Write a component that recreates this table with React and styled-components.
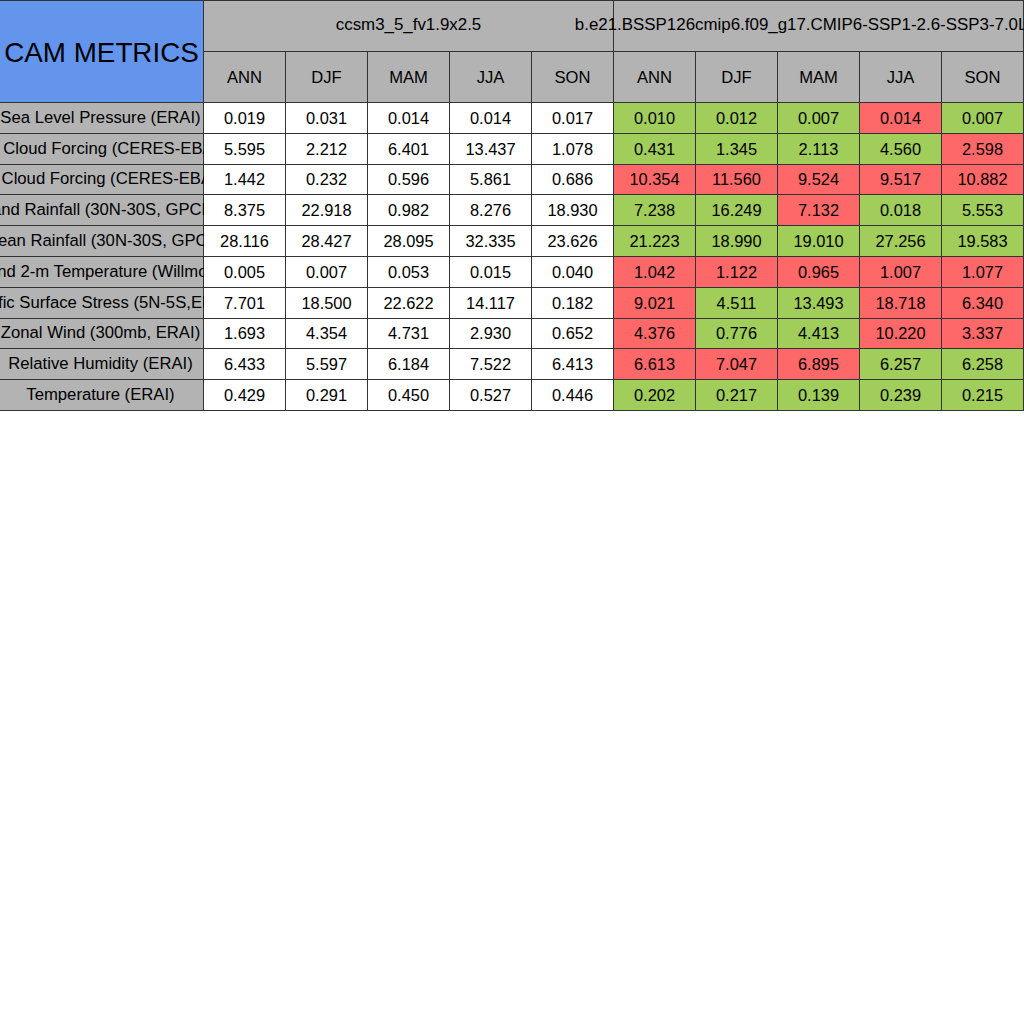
import styled, { createGlobalStyle } from "styled-components";

const GlobalStyle = createGlobalStyle`
	html, body {
		margin: 0;
		padding: 0;
		background: #ffffff;
	}
	body {
		font-family: "Liberation Sans", Arial, sans-serif;
		color: #000000;
	}
`;

const seasons = ["ANN", "DJF", "MAM", "JJA", "SON"];

const baseCase = "ccsm3_5_fv1.9x2.5";
const testCase = "b.e21.BSSP126cmip6.f09_g17.CMIP6-SSP1-2.6-SSP3-7.0LE.01";

// first five numbers: base case, last five: test case
const metrics = [
	["Sea Level Pressure (ERAI)", [0.019, 0.031, 0.014, 0.014, 0.017], [0.01, 0.012, 0.007, 0.014, 0.007]],
	["SW Cloud Forcing (CERES-EBAF)", [5.595, 2.212, 6.401, 13.437, 1.078], [0.431, 1.345, 2.113, 4.56, 2.598]],
	["LW Cloud Forcing (CERES-EBAF)", [1.442, 0.232, 0.596, 5.861, 0.686], [10.354, 11.56, 9.524, 9.517, 10.882]],
	["Land Rainfall (30N-30S, GPCP)", [8.375, 22.918, 0.982, 8.276, 18.93], [7.238, 16.249, 7.132, 0.018, 5.553]],
	["Ocean Rainfall (30N-30S, GPCP)", [28.116, 28.427, 28.095, 32.335, 23.626], [21.223, 18.99, 19.01, 27.256, 19.583]],
	["Land 2-m Temperature (Willmott)", [0.005, 0.007, 0.053, 0.015, 0.04], [1.042, 1.122, 0.965, 1.007, 1.077]],
	["Pacific Surface Stress (5N-5S,ERAI)", [7.701, 18.5, 22.622, 14.117, 0.182], [9.021, 4.511, 13.493, 18.718, 6.34]],
	["Zonal Wind (300mb, ERAI)", [1.693, 4.354, 4.731, 2.93, 0.652], [4.376, 0.776, 4.413, 10.22, 3.337]],
	["Relative Humidity (ERAI)", [6.433, 5.597, 6.184, 7.522, 6.413], [6.613, 7.047, 6.895, 6.257, 6.258]],
	["Temperature (ERAI)", [0.429, 0.291, 0.45, 0.527, 0.446], [0.202, 0.217, 0.139, 0.239, 0.215]],
];

const App = () => {
	return (
		<>
			<GlobalStyle />
			<Table>
				<TitleCell>CAM METRICS</TitleCell>
				<GroupCell $col={2}>
					<CellText>{baseCase}</CellText>
				</GroupCell>
				<GroupCell $col={7}>
					<CellText>{testCase}</CellText>
				</GroupCell>
				{[...seasons, ...seasons].map((s, i) => (
					<SeasonCell key={i}>
						<CellText>{s}</CellText>
					</SeasonCell>
				))}
				{metrics.map(([name, base, test]) => (
					<Row key={name}>
						<LabelCell>
							<CellText>{name}</CellText>
						</LabelCell>
						{base.map((v, i) => (
							<ValueCell key={"b" + i} $tone="plain">
								{v.toFixed(3)}
							</ValueCell>
						))}
						{test.map((v, i) => (
							<ValueCell key={"t" + i} $tone={v < base[i] ? "good" : "bad"}>
								{v.toFixed(3)}
							</ValueCell>
						))}
					</Row>
				))}
			</Table>
		</>
	);
};

const tones = {
	plain: "#ffffff",
	good: "#a1cd5a",
	bad: "#ff6868",
};

const Table = styled.div`
	display: grid;
	grid-template-columns: 204px repeat(10, 82px);
	grid-template-rows: 51px 51px repeat(10, 30.8px);
	width: 1024px;
	border-top: 1px solid #333333;
	box-sizing: border-box;
	font-size: 16.4px;
`;

const Row = styled.div`
	display: contents;
`;

const Cell = styled.div`
	position: relative;
	display: flex;
	align-items: center;
	justify-content: center;
	box-sizing: border-box;
	border-right: 1px solid #333333;
	border-bottom: 1px solid #333333;
	white-space: nowrap;
	min-width: 0;
`;

const CellText = styled.span`
	flex-shrink: 0;
	white-space: nowrap;
`;

const TitleCell = styled(Cell)`
	grid-row: 1 / span 2;
	background: #6495ed;
	font-size: 27.8px;
	padding-top: 2px;
`;

const GroupCell = styled(Cell)`
	grid-column: ${(p) => p.$col} / span 5;
	background: #b3b3b3;
	font-size: 16.9px;
	padding-bottom: 2px;
`;

const SeasonCell = styled(Cell)`
	background: #b3b3b3;
	font-size: 16.6px;
	padding-top: 1px;
`;

const LabelCell = styled(Cell)`
	background: #b3b3b3;
	font-size: 16.7px;
	padding-right: 2px;
`;

const ValueCell = styled(Cell)`
	background: ${(p) => tones[p.$tone]};
	padding-top: 1px;
`;

export default App;
